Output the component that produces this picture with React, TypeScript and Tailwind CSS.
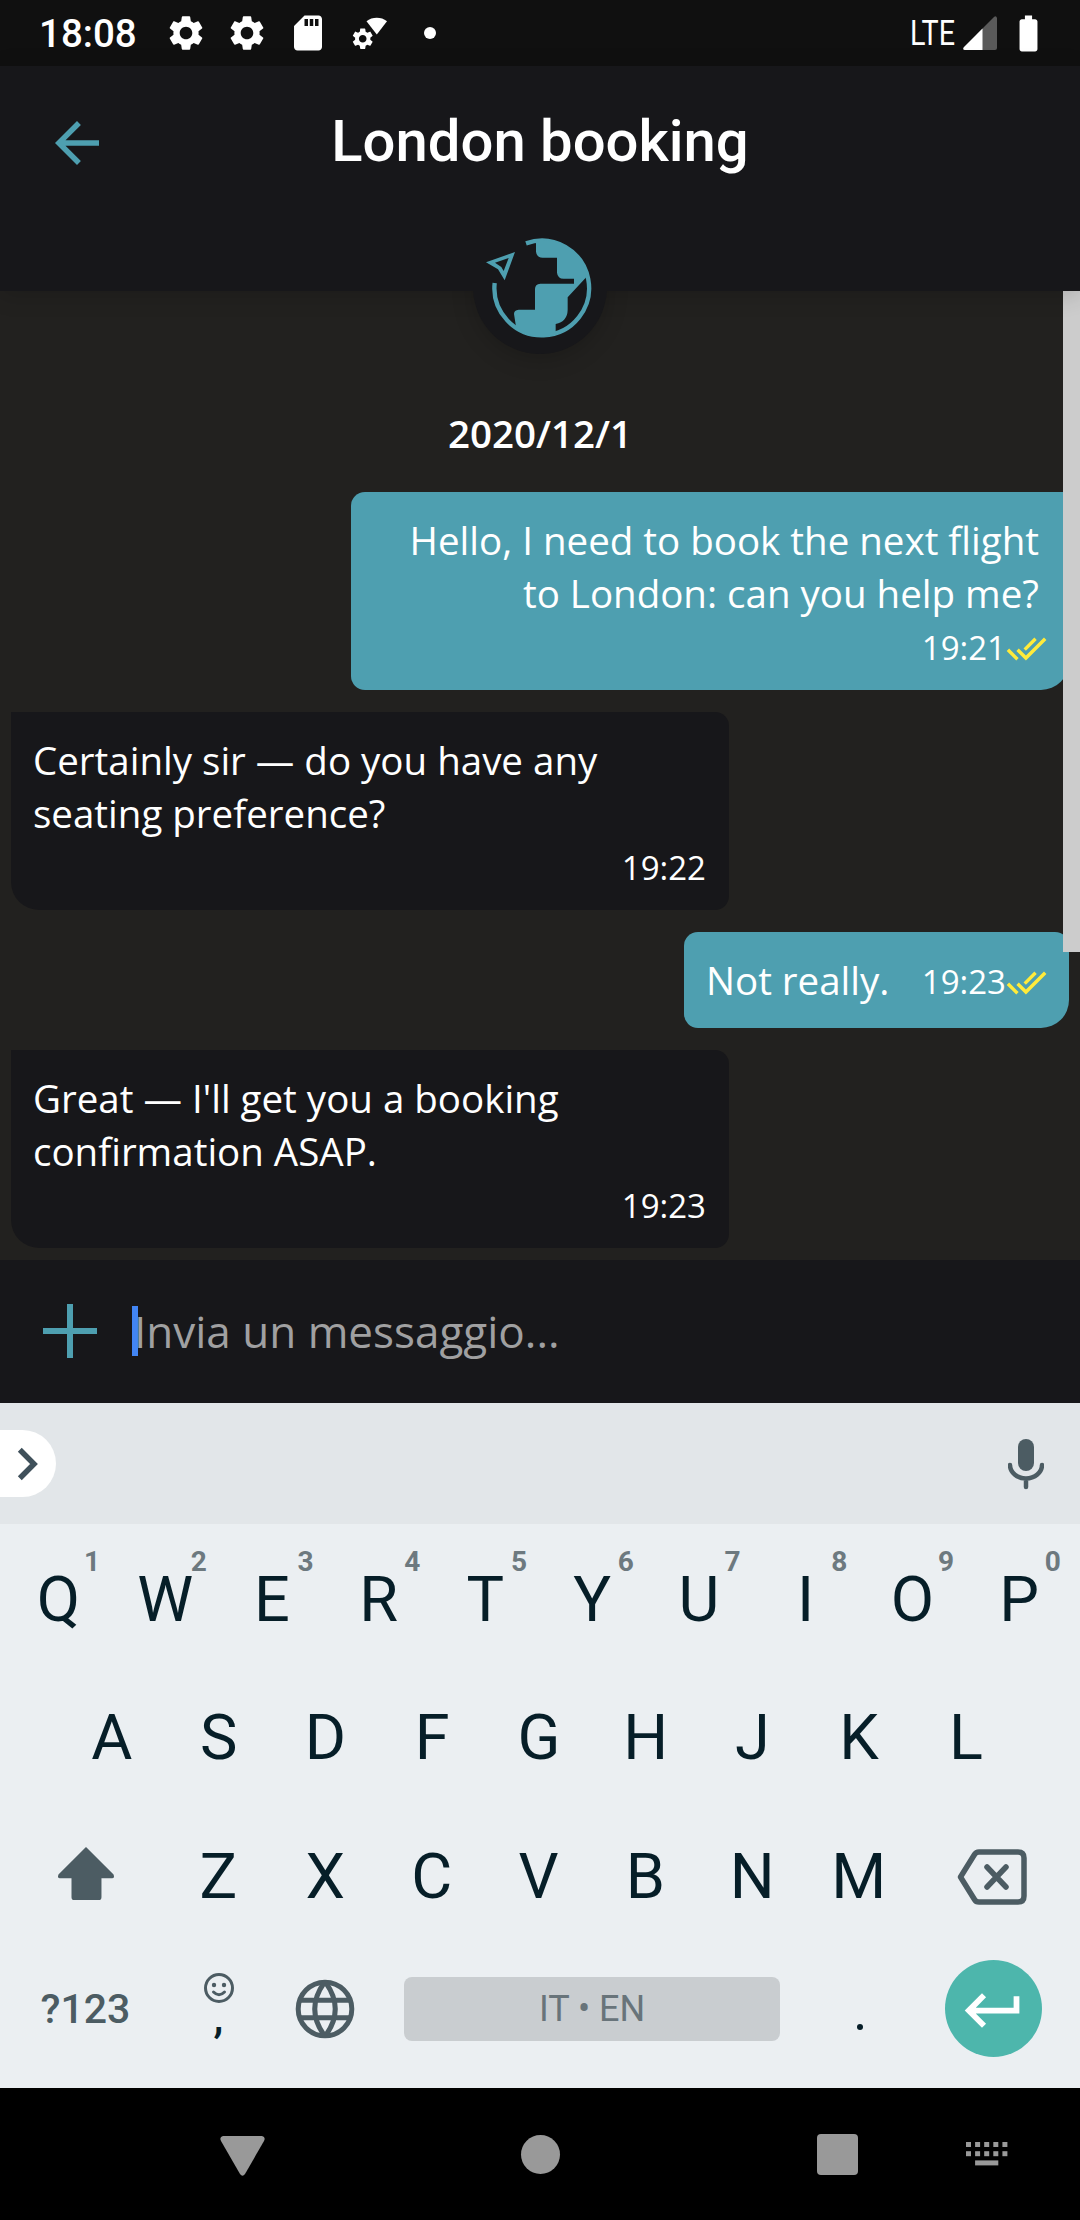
import type { ReactNode } from "react";
import { MdArrowBack, MdBatteryFull, MdDoneAll, MdKeyboardReturn, MdSdCard, MdSettings } from "react-icons/md";

const ROBOTO = "font-['Roboto',sans-serif]";

function StatusBar() {
  return (
    <div className={`flex h-[66px] shrink-0 items-center justify-between bg-[#101010] pr-[30px] pl-[39px] text-white ${ROBOTO}`}>
      <div className="flex h-full items-center">
        <span className="w-[126px] pt-[2px] text-[38.5px] leading-[66px] font-medium">18:08</span>
        <MdSettings className="size-[42px]" />
        <MdSettings className="ml-[19px] size-[42px]" />
        <MdSdCard className="ml-[19px] size-[42px]" />
        <svg className="ml-[23px] h-[36px] w-[36px]" viewBox="0 0 36 36" fill="currentColor">
          <g transform="translate(-2 11) scale(1.06)">
            <MdSettings size={24} />
          </g>
          <path d="M14.5 6.2a17 17 0 0 1 20.500 0L24.800 19.500z" />
        </svg>
        <span className="ml-[36px] size-[12px] rounded-full bg-white" />
      </div>
      <div className="flex h-full items-center">
        <span className="w-[49px] origin-left scale-x-[0.82] pt-[1px] text-[35px] leading-[64px]">LTE</span>
        <svg className="ml-[4px] h-[34px] w-[34px]" viewBox="0 0 34 34">
          <path d="M2 34h30a2 2 0 0 0 2-2V2q-1-3-3-1L.6 31.500Q-.5 34 2 34z" fill="#5a5a5a" />
          <path d="M2 34h17.500V12.600L.6 31.500Q-.5 34 2 34z" fill="#fff" />
        </svg>
        <MdBatteryFull className="ml-[10px] size-[43px]" />
      </div>
    </div>
  );
}

function GlobeLogo() {
  return (
    <svg className="h-[160px] w-[200px]" viewBox="0 0 600 480" fill="#4e9fb0">
      <path d="M258 100A142 142 0 1 1 164 219" fill="none" stroke="#4e9fb0" strokeWidth="13" />
      <path d="M288 96V125Q290 143 308 143H351V188Q353 206 371 206H402V221H301Q285 222 285 237V299H236Q222 300 222 312L228 350Q290 395 347 372V342Q382 335 383 300V262L440 200Q420 120 360 100Q320 84 288 96Z" />
      <path fillRule="evenodd" d="M138 157L225 126L194 211L174 178ZM165 158L184 171L191 183L206 144Z" />
    </svg>
  );
}

function Header() {
  return (
    <header className="relative z-10 flex h-[225px] shrink-0 bg-[#17171a] shadow-[0_4px_22px_rgba(0,0,0,0.16)]">
      <MdArrowBack className="mt-[44px] ml-[44px] size-[66px] text-[#4e9fb0]" />
      <h1 className={`mr-[110px] flex-1 text-center text-[58px] leading-[150px] font-medium text-white ${ROBOTO}`}>London booking</h1>
      <div className="absolute top-[154px] left-[473px] size-[134px] rounded-full bg-[#17171a] shadow-[0_6px_22px_rgba(0,0,0,0.18)] [clip-path:inset(71px_-50px_-50px_-50px)]" />
      <div className="absolute top-[144px] left-[440px]">
        <GlobeLogo />
      </div>
    </header>
  );
}

function Incoming({ lines, time }: { lines: string[]; time: string }) {
  return (
    <div className="flex h-[198px] w-[718px] flex-col rounded-[14px] rounded-tl-none rounded-bl-[28px] bg-[#17171a] pt-[22px] pr-[23px] pl-[22px]">
      {lines.map((line) => (
        <p key={line} className="text-[38.5px] leading-[53px] whitespace-nowrap">{line}</p>
      ))}
      <time className="text-right text-[33px] leading-[56px]">{time}</time>
    </div>
  );
}

function Stamp({ time }: { time: string }) {
  return (
    <div className="flex items-center">
      <time className="text-[33px] leading-[56px]">{time}</time>
      <MdDoneAll className="size-[41px] text-[#ffeb3b]" />
    </div>
  );
}

function Chat() {
  return (
    <main className="relative flex h-[969px] shrink-0 flex-col bg-[#22211f] px-[11px] text-white">
      <p className="pt-[115px] text-center text-[38.5px] leading-[54px] font-semibold">2020/12/1</p>
      <div className="mt-[32px] flex h-[198px] w-[718px] flex-col items-end self-end rounded-[14px] rounded-tr-none rounded-br-[28px] bg-[#4e9fb0] pt-[22px] pr-[22px]">
        <p className="pr-[8px] text-right text-[38.5px] leading-[53px] whitespace-nowrap">
          Hello, I need to book the next flight
          <br />
          to London: can you help me?
        </p>
        <Stamp time="19:21" />
      </div>
      <div className="mt-[22px]">
        <Incoming lines={["Certainly sir — do you have any", "seating preference?"]} time="19:22" />
      </div>
      <div className="mt-[22px] flex h-[96px] w-[385px] items-start justify-between self-end rounded-[14px] rounded-br-[28px] bg-[#4e9fb0] pt-[22px] pr-[22px] pl-[22px]">
        <p className="text-[38.5px] leading-[53px] whitespace-nowrap">Not really.</p>
        <Stamp time="19:23" />
      </div>
      <div className="mt-[22px]">
        <Incoming lines={["Great — I'll get you a booking", "confirmation ASAP."]} time="19:23" />
      </div>
      <div className="absolute top-0 right-0 h-[661px] w-[17px] bg-[#cccccc]" />
    </main>
  );
}

function Composer() {
  return (
    <div className="flex h-[143px] shrink-0 items-center bg-[#17171a] pb-[2px] pl-[43px]">
      <svg className="h-[54px] w-[54px]" viewBox="0 0 54 54" stroke="#4e9fb0" strokeWidth="6">
        <path d="M27 0V54M0 27H54" />
      </svg>
      <span className="ml-[35px] h-[50px] w-[6px] bg-[#4285f4]" />
      <span className="-ml-[4px] text-[44px] leading-[60px] text-[#a0a0a1]">Invia un messaggio...</span>
    </div>
  );
}

function Key({ label, hint }: { label: string; hint?: string }) {
  return (
    <div className="relative flex h-full w-[106.75px] items-center justify-center text-[63px] leading-[74px] text-[#061e28]">
      {label}
      {hint && <span className="absolute top-[15px] left-[79px] text-[28px] leading-[34px] font-bold text-[#6d797f]">{hint}</span>}
    </div>
  );
}

function Slot({ className, children }: { className: string; children: ReactNode }) {
  return <div className={`flex h-full items-center justify-center ${className}`}>{children}</div>;
}

function Keyboard() {
  return (
    <div className={`flex shrink-0 flex-col ${ROBOTO}`}>
      <div className="flex h-[121px] items-center justify-between bg-[#e2e6e9] pr-[36px]">
        <div className="flex h-[67px] w-[56px] items-center rounded-r-full bg-white pl-[17px]">
          <svg className="h-[34px] w-[22px]" viewBox="0 0 22 34" fill="none" stroke="#3f505a" strokeWidth="5.500">
            <path d="M2.800 2.800L17 17L2.800 31.200" />
          </svg>
        </div>
        <svg className="h-[52px] w-[36px]" viewBox="0 0 36 52" fill="#4c5c63">
          <rect x="10" y="1" width="16" height="32" rx="8" />
          <path d="M2 27a16 13.500 0 0 0 32 0M18 41v8" fill="none" stroke="#4c5c63" strokeWidth="4.500" strokeLinecap="round" />
        </svg>
      </div>
      <div className="flex h-[564px] flex-col bg-[#ebeff2] pt-[6px]">
        <div className="flex h-[139px] pl-[5px]">
          {"QWERTYUIOP".split("").map((k, i) => (
            <Key key={k} label={k} hint={String((i + 1) % 10)} />
          ))}
        </div>
        <div className="flex h-[138px] pl-[58.5px]">
          {"ASDFGHJKL".split("").map((k) => (
            <Key key={k} label={k} />
          ))}
        </div>
        <div className="flex h-[139px]">
          <Slot className="w-[165px] pb-[6px] pl-[6px]">
            <svg className="h-[55px] w-[58px]" viewBox="0 0 60 58" preserveAspectRatio="none" fill="#4c5c63">
              <path d="M30 1L58.500 30Q60 34 57 34H46V54Q46 57 43 57H18Q15 57 15 54V34H3Q0 34 1.500 30Z" />
            </svg>
          </Slot>
          {"ZXCVBNM".split("").map((k) => (
            <Key key={k} label={k} />
          ))}
          <Slot className="w-[167.75px] pr-[9px]">
            <svg className="h-[56px] w-[70px]" viewBox="0 0 70 56" fill="none" stroke="#4c5c63" strokeWidth="5.500" strokeLinejoin="round" strokeLinecap="round">
              <path d="M22 3H61Q67 3 67 9V47Q67 53 61 53H22Q19 53 17.500 50.500L3.500 28L17.500 5.500Q19 3 22 3Z" />
              <path d="M30 18L49 38M49 18L30 38" />
            </svg>
          </Slot>
        </div>
        <div className="flex h-[125px] text-[#4c5c63]">
          <Slot className="w-[166px] pt-[2px] pl-[5px] text-[41px] font-medium">?123</Slot>
          <div className="flex w-[105px] flex-col items-center pt-[26px]">
            <svg className="h-[32px] w-[32px]" viewBox="0 0 32 32" fill="none" stroke="#4c5c63" strokeWidth="3" strokeLinecap="round">
              <circle cx="16" cy="16" r="13.500" />
              <path d="M10.500 20Q16 25.500 21.500 20" />
              <circle cx="11" cy="13" r="2.200" fill="#4c5c63" stroke="none" />
              <circle cx="21" cy="13" r="2.200" fill="#4c5c63" stroke="none" />
            </svg>
            <span className="-mt-[12px] text-[44px] leading-[50px] font-medium text-[#061e28]">,</span>
          </div>
          <Slot className="w-[107px]">
            <svg className="h-[60px] w-[60px]" viewBox="0 0 60 60" fill="none" stroke="#4c5c63" strokeWidth="5">
              <circle cx="30" cy="30" r="26.800" />
              <path d="M5 21.300H55M5 38.700H55M29 4Q10.500 30 29 56M31 4Q49.500 30 31 56" />
            </svg>
          </Slot>
          <Slot className="w-[428px]">
            <div className="flex h-[64px] w-[376px] items-center justify-center rounded-[8px] bg-[#c9cdd0] text-[36px] leading-[64px] text-[#68747a]">IT • EN</div>
          </Slot>
          <Slot className="w-[107px] pt-[36px]">
            <span className="size-[6px] rounded-full bg-[#061e28]" />
          </Slot>
          <Slot className="w-[161px]">
            <div className="flex size-[97px] items-center justify-center rounded-full bg-[#4db6ac]">
              <MdKeyboardReturn className="mt-[4px] size-[69px] text-white" />
            </div>
          </Slot>
        </div>
      </div>
    </div>
  );
}

function NavBar() {
  return (
    <nav className="flex h-[132px] items-center bg-black text-[#999]">
      <svg className="mt-[4px] ml-[220px] h-[40px] w-[45px]" viewBox="0 0 45 40" fill="currentColor">
        <path d="M3 0H42Q46 1 44 5L25 38Q22.500 41.500 20 38L1 5Q-1 1 3 0Z" />
      </svg>
      <span className="ml-[256px] size-[39px] rounded-full bg-[#999]" />
      <span className="ml-[257px] size-[41px] rounded-[4px] bg-[#999]" />
      <svg className="ml-[108px] h-[24px] w-[42px]" viewBox="0 0 42 24" fill="currentColor">
        {[0, 9.1, 18.2, 27.3, 36.4].map((x) => (
          <g key={x}>
            <rect x={x} y="0" width="5" height="5" />
            <rect x={x} y="9.200" width="5" height="5" />
          </g>
        ))}
        <rect x="9.100" y="18.400" width="23.200" height="5" />
      </svg>
    </nav>
  );
}

export default function App() {
  return (
    <div className="flex h-[2220px] w-[1080px] flex-col overflow-hidden bg-black font-['Open_Sans',sans-serif]">
      <StatusBar />
      <Header />
      <Chat />
      <Composer />
      <Keyboard />
      <NavBar />
    </div>
  );
}
